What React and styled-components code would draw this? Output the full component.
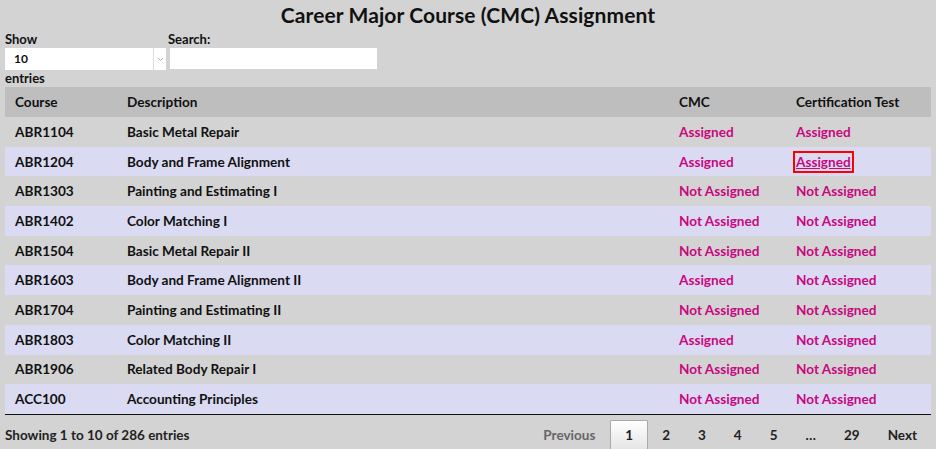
import React from "react";
import styled, { createGlobalStyle } from "styled-components";

const Global = createGlobalStyle`
  html, body { margin: 0; padding: 0; background: #d3d3d3; }
  body { font-family: Lato, "DejaVu Sans", sans-serif; color: #111; }
`;

const Page = styled.div`
  width: 936px;
  height: 449px;
  overflow: hidden;
  background: #d3d3d3;
  padding: 0 5px;
  box-sizing: border-box;
`;

const Title = styled.h1`
  margin: 0;
  padding-top: 2px;
  height: 28px;
  font-size: 21px;
  font-weight: 700;
  text-align: center;
  color: #111;
  letter-spacing: 0.1px;
`;

const Controls = styled.div`
  display: flex;
  align-items: flex-start;
  gap: 2px;
`;

const Field = styled.label`
  display: flex;
  flex-direction: column;
  font-size: 13px;
  font-weight: 700;
  line-height: 18px;
`;

const SelectBox = styled.div`
  width: 161px;
  height: 22px;
  background: #fff;
  display: flex;
  align-items: center;
  font-size: 12px;
  font-weight: 700;
  box-sizing: border-box;
  padding-left: 9px;
`;

const Chevron = styled.span`
  margin-left: auto;
  width: 12px;
  height: 100%;
  border-left: 1px solid #ddd;
  display: flex;
  align-items: center;
  justify-content: center;
`;

const Input = styled.div`
  width: 207px;
  height: 21px;
  margin-left: 2px;
  background: #fff;
`;

const Entries = styled.div`
  font-size: 13px;
  font-weight: 700;
  line-height: 17px;
  height: 17px;
`;

const Table = styled.table`
  width: 926px;
  border-collapse: collapse;
  border-bottom: 1px solid #111;
  font-size: 13.6px;
  font-weight: 700;
`;

const Th = styled.th`
  background: #bebebe;
  text-align: left;
  height: 30px;
  padding: 0 0 0 10px;
  box-sizing: border-box;
  width: ${(p) => p.$w}px;
  font-weight: 700;
  color: #111;
`;

const Tr = styled.tr`
  background: ${(p) => (p.$alt ? "#dadaf2" : "#d3d3d3")};
`;

const Td = styled.td`
  height: 29.7px;
  padding: 0 0 0 10px;
  color: ${(p) => (p.$pink ? "#c8087f" : "#111")};
`;

const FocusLink = styled.a`
  color: #c8087f;
  text-decoration: underline;
  outline: 2px solid #f00;
  outline-offset: 1px;
`;

const Footer = styled.div`
  display: flex;
  align-items: flex-end;
  justify-content: space-between;
  height: 35px;
  font-size: 13.5px;
  font-weight: 700;
`;

const Info = styled.div`
  padding-bottom: 7px;
  color: #222;
`;

const Pager = styled.div`
  display: flex;
  align-items: flex-end;
`;

const PageBtn = styled.span`
  display: flex;
  align-items: center;
  justify-content: center;
  height: 30px;
  box-sizing: border-box;
  padding: 0 ${(p) => p.$pad ?? 14}px;
  min-width: ${(p) => p.$min || 0}px;
  color: ${(p) => (p.$muted ? "#666" : "#222")};
  font-size: 13.5px;
  ${(p) =>
    p.$current &&
    `
    border: 1px solid #aaa;
    border-bottom: none;
    border-radius: 2px 2px 0 0;
    background: linear-gradient(#fff, #e4e4e4);
  `}
`;

const rows = [
  ["ABR1104", "Basic Metal Repair", "Assigned", "Assigned"],
  ["ABR1204", "Body and Frame Alignment", "Assigned", "Assigned"],
  ["ABR1303", "Painting and Estimating I", "Not Assigned", "Not Assigned"],
  ["ABR1402", "Color Matching I", "Not Assigned", "Not Assigned"],
  ["ABR1504", "Basic Metal Repair II", "Not Assigned", "Not Assigned"],
  ["ABR1603", "Body and Frame Alignment II", "Assigned", "Not Assigned"],
  ["ABR1704", "Painting and Estimating II", "Not Assigned", "Not Assigned"],
  ["ABR1803", "Color Matching II", "Assigned", "Not Assigned"],
  ["ABR1906", "Related Body Repair I", "Not Assigned", "Not Assigned"],
  ["ACC100", "Accounting Principles", "Not Assigned", "Not Assigned"],
];

export default function App() {
  return (
    <Page>
      <Global />
      <Title>Career Major Course (CMC) Assignment</Title>
      <Controls>
        <Field>
          Show
          <SelectBox>
            10
            <Chevron>
              <svg width="7" height="5" viewBox="0 0 7 5">
                <path d="M1 1 L3.5 3.5 L6 1" fill="none" stroke="#aaa" strokeWidth="1" />
              </svg>
            </Chevron>
          </SelectBox>
        </Field>
        <Field>
          Search:
          <Input />
        </Field>
      </Controls>
      <Entries>entries</Entries>
      <Table>
        <thead>
          <tr>
            <Th $w={112}>Course</Th>
            <Th $w={552}>Description</Th>
            <Th $w={117}>CMC</Th>
            <Th>Certification Test</Th>
          </tr>
        </thead>
        <tbody>
          {rows.map((r, i) => (
            <Tr key={r[0]} $alt={i % 2 === 1}>
              <Td>{r[0]}</Td>
              <Td>{r[1]}</Td>
              <Td $pink>{r[2]}</Td>
              <Td $pink>
                {i === 1 ? <FocusLink href="#">{r[3]}</FocusLink> : r[3]}
              </Td>
            </Tr>
          ))}
        </tbody>
      </Table>
      <Footer>
        <Info>Showing 1 to 10 of 286 entries</Info>
        <Pager>
          <PageBtn $muted $pad={15}>Previous</PageBtn>
          <PageBtn $current $min={34}>1</PageBtn>
          <PageBtn>2</PageBtn>
          <PageBtn>3</PageBtn>
          <PageBtn>4</PageBtn>
          <PageBtn>5</PageBtn>
          <PageBtn>…</PageBtn>
          <PageBtn>29</PageBtn>
          <PageBtn>Next</PageBtn>
        </Pager>
      </Footer>
    </Page>
  );
}
